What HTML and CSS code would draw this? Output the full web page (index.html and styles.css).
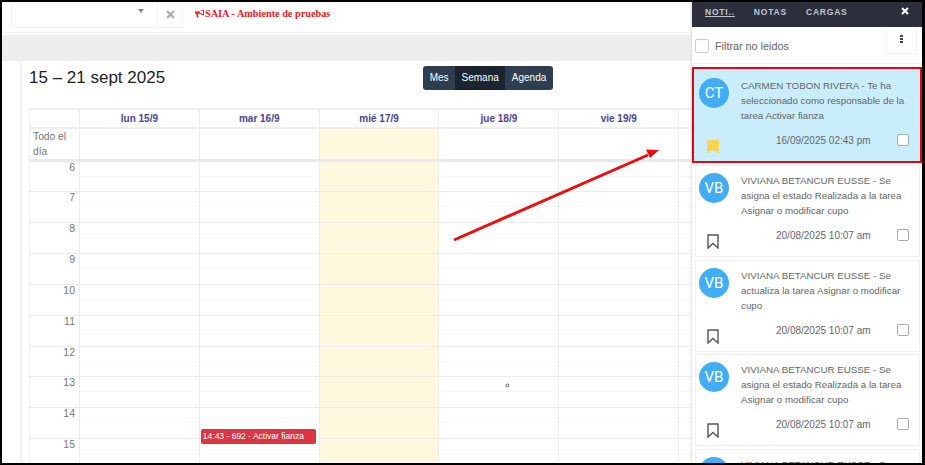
FILE: index.html
```html
<!DOCTYPE html>
<html lang="es">
<head>
  <meta charset="UTF-8">
  <title>SAIA - Calendario</title>
  <link rel="stylesheet" href="styles.css">
</head>
<body>
  <div class="frame">
    <!-- Barra superior -->
    <div class="topbar">
      <div class="select-box"><span class="caret"></span></div>
      <div class="clear-box">
        <svg width="9" height="9" viewBox="0 0 9 9"><path d="M1 1l7 7M8 1l-7 7" stroke="#aeaeae" stroke-width="2.4"/></svg>
      </div>
      <div class="env-title">
        <svg width="10" height="9" viewBox="0 0 10 9"><path d="M0 2.500h3.500L9 0.500v6L3.500 4.600H3L3.600 8.500H2L1.200 4.600H0z" fill="#e81c1c"/><path d="M4.500 2.800L8 1.500v3.500L4.500 3.800z" fill="#fff"/></svg>
        <span>SAIA - Ambiente de pruebas</span>
      </div>
    </div>
    <div class="grey-band"></div>

    <div class="content">
      <div class="side-strip"></div>
      <div class="calendar">
        <div class="cal-toolbar">
          <h2 class="cal-title">15 – 21 sept 2025</h2>
          <div class="btn-group">
            <span class="btn">Mes</span>
            <span class="btn active">Semana</span>
            <span class="btn">Agenda</span>
          </div>
        </div>

        <table class="week">
          <tr class="head">
            <th class="t"></th><th>lun 15/9</th><th>mar 16/9</th><th>mié 17/9</th><th>jue 18/9</th><th>vie 19/9</th><th></th>
          </tr>
          <tr class="allday">
            <td class="t">Todo el día</td><td></td><td></td><td class="today"></td><td></td><td></td><td></td>
          </tr>
          <tr class="divider"><td colspan="7"></td></tr>
          <tr class="hour first"><td class="t">6</td><td></td><td></td><td class="today"></td><td></td><td></td><td></td></tr>
          <tr class="hour"><td class="t">7</td><td></td><td></td><td class="today"></td><td></td><td></td><td></td></tr>
          <tr class="hour"><td class="t">8</td><td></td><td></td><td class="today"></td><td></td><td></td><td></td></tr>
          <tr class="hour"><td class="t">9</td><td></td><td></td><td class="today"></td><td></td><td></td><td></td></tr>
          <tr class="hour"><td class="t">10</td><td></td><td></td><td class="today"></td><td></td><td></td><td></td></tr>
          <tr class="hour"><td class="t">11</td><td></td><td></td><td class="today"></td><td></td><td></td><td></td></tr>
          <tr class="hour short"><td class="t">12</td><td></td><td></td><td class="today"></td><td></td><td></td><td></td></tr>
          <tr class="hour"><td class="t">13</td><td></td><td></td><td class="today"></td><td></td><td></td><td></td></tr>
          <tr class="hour"><td class="t">14</td><td></td><td class="has-event"><div class="event">14:43 - 692 - Activar fianza</div></td><td class="today"></td><td></td><td></td><td></td></tr>
          <tr class="hour"><td class="t">15</td><td></td><td></td><td class="today"></td><td></td><td></td><td></td></tr>
        </table>
      </div>
    </div>

    <!-- Flecha de la captura -->
    <svg class="arrow" width="925" height="465" viewBox="0 0 925 465">
      <path d="M454 240L648 155" stroke="#f00c0c" stroke-width="3" fill="none"/>
      <path d="M659 150L646 149.500L650 158z" fill="#f00c0c"/>
      <circle cx="507.500" cy="385.500" r="1.400" fill="#fff" stroke="#444" stroke-width="0.800"/>
    </svg>

    <!-- Panel lateral -->
    <aside class="panel">
      <div class="panel-tabs">
        <span class="tab current">NOTI..</span>
        <span class="tab">NOTAS</span>
        <span class="tab">CARGAS</span>
        <svg class="tab-close" width="8" height="8" viewBox="0 0 8 8"><path d="M1 1l6 6M7 1l-6 6" stroke="#fff" stroke-width="2"/></svg>
      </div>
      <div class="panel-filter">
        <span class="check big"></span>
        <span class="filter-label">Filtrar no leidos</span>
        <div class="dots-box"><i></i><i></i><i></i></div>
      </div>

      <div class="notif selected">
        <div class="notif-top">
          <div class="avatar">CT</div>
          <p class="notif-text">CARMEN TOBON RIVERA - Te ha seleccionado como responsable de la tarea Activar fianza</p>
        </div>
        <div class="notif-foot">
          <svg class="mark" width="14" height="15" viewBox="0 0 14 15"><path d="M1 1h12v13.500L7 11l-6 3.500z" fill="#fbd354"/></svg>
          <span class="notif-date">16/09/2025 02:43 pm</span>
          <span class="check"></span>
        </div>
      </div>

      <div class="notif">
        <div class="notif-top">
          <div class="avatar">VB</div>
          <p class="notif-text">VIVIANA BETANCUR EUSSE - Se asigna el estado Realizada a la tarea Asignar o modificar cupo</p>
        </div>
        <div class="notif-foot">
          <svg class="mark" width="14" height="15" viewBox="0 0 14 15"><path d="M2 1h10v13l-5-4.500L2 14z" fill="none" stroke="#555" stroke-width="1.400"/></svg>
          <span class="notif-date">20/08/2025 10:07 am</span>
          <span class="check"></span>
        </div>
      </div>

      <div class="notif">
        <div class="notif-top">
          <div class="avatar">VB</div>
          <p class="notif-text">VIVIANA BETANCUR EUSSE - Se actualiza la tarea Asignar o modificar cupo</p>
        </div>
        <div class="notif-foot">
          <svg class="mark" width="14" height="15" viewBox="0 0 14 15"><path d="M2 1h10v13l-5-4.500L2 14z" fill="none" stroke="#555" stroke-width="1.400"/></svg>
          <span class="notif-date">20/08/2025 10:07 am</span>
          <span class="check"></span>
        </div>
      </div>

      <div class="notif">
        <div class="notif-top">
          <div class="avatar">VB</div>
          <p class="notif-text">VIVIANA BETANCUR EUSSE - Se asigna el estado Realizada a la tarea Asignar o modificar cupo</p>
        </div>
        <div class="notif-foot">
          <svg class="mark" width="14" height="15" viewBox="0 0 14 15"><path d="M2 1h10v13l-5-4.500L2 14z" fill="none" stroke="#555" stroke-width="1.400"/></svg>
          <span class="notif-date">20/08/2025 10:07 am</span>
          <span class="check"></span>
        </div>
      </div>

      <div class="notif">
        <div class="notif-top">
          <div class="avatar">VB</div>
          <p class="notif-text">VIVIANA BETANCUR EUSSE - Se asigna el estado Realizada a la tarea Asignar o modificar cupo</p>
        </div>
      </div>
    </aside>
  </div>
</body>
</html>
```

FILE: styles.css
```css
* {
  box-sizing: border-box;
}

html, body {
  margin: 0;
  height: 100%;
  overflow: hidden;
}

body {
  font-family: "Liberation Sans", Arial, sans-serif;
  background-color: white;
}

.frame {
  position: relative;
  width: 925px;
  height: 465px;
  overflow: hidden;
  border: 2px solid black;
  border-right-width: 3px;
  background-color: white;
}

/* Barra superior */
.topbar {
  display: flex;
  align-items: flex-start;
  height: 31px;
  padding-left: 9px;
  border-bottom: 1px solid #f0f0f0;
}

.select-box {
  position: relative;
  width: 147px;
  height: 26px;
  border: 1px solid #f2f2f2;
  border-top: 0;
  border-radius: 0 0 3px 3px;
}

.caret {
  position: absolute;
  top: 7px;
  right: 13px;
  border: 3px solid transparent;
  border-top: 4px solid #8a8a8a;
}

.clear-box {
  display: flex;
  align-items: center;
  justify-content: center;
  width: 25px;
  height: 26px;
  border: 1px solid #f2f2f2;
  border-top: 0;
  border-left: 0;
}

.env-title {
  display: flex;
  align-items: center;
  height: 23px;
  margin-left: 12px;
  font-family: "Liberation Serif", serif;
  font-size: 10.250px;
  font-weight: bold;
  color: #e81c1c;
}

.grey-band {
  height: 26px;
  margin-top: 2px;
  background-color: #eeeeee;
}

.content {
  display: flex;
  height: 402px;
}

.side-strip {
  width: 20px;
  flex: none;
  border-right: 2px solid #f2f2f2;
}

/* Calendario */
.calendar {
  flex: 1;
  min-width: 0;
  padding-left: 7px;
}

.cal-toolbar {
  display: flex;
  height: 47px;
}

.cal-title {
  margin: 6px 0 0;
  font-size: 17px;
  font-weight: normal;
  line-height: 22px;
  color: #222;
}

.btn-group {
  display: flex;
  height: 24px;
  margin: 5px 0 0 258px;
  border-radius: 3px;
  overflow: hidden;
}

.btn {
  padding: 0 6.500px;
  font-size: 10px;
  line-height: 24px;
  color: white;
  background-color: #2c3e50;
}

.btn.active {
  background-color: #1a252f;
}

.week {
  width: 770px;
  table-layout: fixed;
  border-collapse: collapse;
  border-top: 2px solid #efefef;
  border-left: 1px solid #efefef;
}

.week th, .week td {
  padding: 0;
  border-right: 1px solid #ececec;
}

.week .t {
  width: 50px;
}

.head th {
  height: 19px;
  font-size: 10px;
  color: #4b4494;
  border-bottom: 2px solid #efefef;
}

.allday td {
  height: 30px;
}

.allday .t {
  padding: 0 3px;
  font-size: 10.250px;
  line-height: 15px;
  color: #777;
}

.divider td {
  height: 3px;
  background-color: #e9e9e9;
  border: 0;
}

.hour td {
  height: 31px;
  border-bottom: 1px solid #ececec;
  background-image: linear-gradient(#f7f7f7, #f7f7f7);
  background-size: 100% 1px;
  background-position: 0 14px;
  background-repeat: no-repeat;
}

.hour.short td {
  height: 30px;
}

.hour.first td {
  height: 29px;
}

.hour .t {
  padding: 0 4px 0 0;
  vertical-align: top;
  text-align: right;
  font-size: 10.500px;
  line-height: 11px;
  color: #777;
  background-image: none;
}

.week .today {
  background-color: #fff8de;
  background-image: none;
}

.has-event {
  position: relative;
}

.event {
  position: absolute;
  left: 1px;
  right: 3px;
  top: 21px;
  height: 15px;
  padding-left: 2px;
  border-radius: 2px;
  font-size: 8.500px;
  line-height: 15px;
  white-space: nowrap;
  color: white;
  background-color: #dc3545;
}

.arrow {
  position: absolute;
  left: -2px;
  top: -2px;
  pointer-events: none;
}

/* Panel de notificaciones */
.panel {
  position: absolute;
  top: 0;
  right: 0;
  bottom: 0;
  width: 230px;
  overflow: hidden;
  background-color: white;
  box-shadow: -1px 0 2px #ddd;
}

.panel-tabs {
  position: relative;
  display: flex;
  align-items: center;
  gap: 19px;
  height: 25px;
  padding: 0 0 5px 13px;
  background-color: #2b2f3b;
}

.tab {
  font-size: 8.500px;
  font-weight: bold;
  letter-spacing: 0.800px;
  color: #c4c6cc;
}

.tab.current {
  text-decoration: underline;
}

.tab-close {
  position: absolute;
  right: 13px;
  top: 5px;
}

.panel-filter {
  display: flex;
  align-items: center;
  height: 37px;
  padding: 2px 5px 0 3px;
  border-bottom: 1px solid #f0f0f0;
}

.filter-label {
  margin-left: 6px;
  font-size: 10.800px;
  color: #666;
}

.dots-box {
  display: flex;
  flex-direction: column;
  align-items: center;
  gap: 1px;
  width: 31px;
  height: 27px;
  margin: -11px 0 0 auto;
  padding-top: 8px;
  border: 1px solid #f2f2f2;
  border-top: 0;
}

.dots-box i {
  width: 3px;
  height: 2px;
  background-color: #444;
}

.check {
  flex: none;
  width: 12px;
  height: 12px;
  border: 1px solid #aaa;
  border-radius: 2px;
  background-color: white;
}

.check.big {
  width: 14px;
  height: 14px;
  border-color: #ccc;
}

.notif {
  height: 92px;
  margin: 2.500px 2px 0 3px;
  padding: 7px 6px 0 3px;
  border: 1px solid #f0f0f0;
}

.notif.selected {
  height: 96px;
  margin: 3px 0 -0.500px 0;
  padding: 9px 6px 0 5px;
  border: 2px solid #e8000c;
  background-color: #c9edfb;
}

.notif-top {
  display: flex;
  align-items: flex-start;
}

.avatar {
  flex: none;
  width: 30px;
  height: 30px;
  border-radius: 50%;
  font-family: Roboto, Arial, sans-serif;
  font-size: 15px;
  line-height: 30px;
  text-align: center;
  color: white;
  background-color: #42adf5;
}

.notif-text {
  margin: 0 0 0 12px;
  font-size: 9.750px;
  line-height: 15px;
  color: #666;
}

.notif-foot {
  display: flex;
  align-items: flex-start;
  margin-top: 11px;
}

.mark {
  margin: 5px 0 0 7px;
}

.notif-date {
  margin: 0 0 0 56px;
  font-size: 10px;
  line-height: 14px;
  color: #666;
}

.notif-foot .check {
  margin-left: 26px;
}
```
